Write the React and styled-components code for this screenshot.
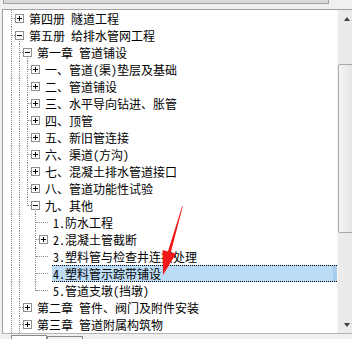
import styled, { createGlobalStyle } from "styled-components"

const GlobalStyle = createGlobalStyle`
  html, body {
    margin: 0;
    padding: 0;
    background: #f0f0f0;
    overflow: hidden;
  }
  body {
    font-family: "Noto Sans CJK SC", "Noto Sans", sans-serif;
  }
`

const Frame = styled.div`
  position: relative;
  width: 352px;
  height: 339px;
  overflow: hidden;
  display: flex;
  flex-direction: column;
  background: #f0f0f0;
`

const TopStrip = styled.div`
  height: 9px;
  flex: none;
`

const TopBox = styled.div`
  margin-left: 3px;
  width: 324px;
  height: 3px;
  background: #dadada;
  border: 1px solid #a3a3a3;
  border-top: none;
`

const Panel = styled.div`
  flex: none;
  display: flex;
  width: 352px;
  height: 323px;
  margin-left: 2px;
  border-top: 1px solid #a0a0a0;
  border-left: 1px solid #a0a0a0;
  border-bottom: 1px solid #b4b4b4;
`

const Tree = styled.div`
  width: 334px;
  flex: none;
  background: #fff;
  overflow: hidden;
`

const Row = styled.div`
  display: flex;
  height: 17px;
  padding-left: 4px;
`

const Cell = styled.span`
  position: relative;
  flex: none;
  width: 8px;

  &::before {
    content: ${p => (p.$v ? '""' : "none")};
    position: absolute;
    left: 4px;
    top: ${p => (p.$v === "down" ? "8px" : "0")};
    height: ${p => (p.$v === "up" ? "9px" : p.$v === "down" ? "9px" : "17px")};
    border-left: 1px dotted #8c8c8c;
  }

  &::after {
    content: ${p => (p.$h ? '""' : "none")};
    position: absolute;
    left: 5px;
    top: 8px;
    width: ${p => p.$h || 0}px;
    border-top: 1px dotted #8c8c8c;
  }
`

const Toggle = styled.span`
  position: absolute;
  left: 0;
  top: 4px;
  width: 7px;
  height: 7px;
  border: 1px solid #8f8f8f;
  background: #fff;
  z-index: 1;

  &::before {
    content: "";
    position: absolute;
    left: 1px;
    top: 3px;
    width: 5px;
    height: 1px;
    background: #000;
  }

  &::after {
    content: ${p => (p.$open ? "none" : '""')};
    position: absolute;
    left: 3px;
    top: 1px;
    width: 1px;
    height: 5px;
    background: #000;
  }
`

const Label = styled.span`
  flex: 1;
  margin-left: 5px;
  padding-left: 1px;
  font-size: 12px;
  line-height: 15px;
  height: 15px;
  color: #000;
  white-space: pre;
  font-feature-settings: "hwid" 1;
  background: ${p => (p.$selected ? "#bcdbf5" : "transparent")};
  border: 1px dotted ${p => (p.$selected ? "#000" : "transparent")};
  border-left: none;
  border-right: none;
  box-shadow: ${p => (p.$selected ? "inset -4px 0 0 #a9cdee" : "none")};
`

const ScrollBar = styled.div`
  width: 17px;
  flex: none;
  display: flex;
  flex-direction: column;
  background: #ebebeb;
  border-left: 1px solid #f6f6f6;
`

const ArrowBtn = styled.div`
  height: 17px;
  flex: none;
  display: flex;
  align-items: center;
  justify-content: center;

  &::before {
    content: "";
    width: 0;
    height: 0;
    border-left: 3.5px solid transparent;
    border-right: 3.5px solid transparent;
    ${p => (p.$down ? "border-top: 4px solid #404040;" : "border-bottom: 4px solid #404040;")}
  }
`

const Thumb = styled.div`
  margin: 37px 0 0 0;
  height: 167px;
  flex: none;
  border: 1px solid #a8a8a8;
  border-radius: 2px;
  background: linear-gradient(to right, #f5f5f5, #e2e2e2);
`

const Fill = styled.div`
  flex: 1;
`

const TabBar = styled.div`
  flex: 1;
  display: flex;
  padding-left: 11px;
  padding-top: 1px;
`

const Tab = styled.div`
  width: 34px;
  height: 20px;
  margin-top: ${p => (p.$active ? "0" : "1px")};
  border: 1px solid #8a8a8a;
  border-bottom: none;
  background: ${p => (p.$active ? "#fff" : "#f0f0f0")};
  font-size: 12px;
  line-height: 17px;
  padding-top: 1px;
  text-align: center;
  color: #000;
`

const Arrow = styled.svg`
  position: absolute;
  left: 0;
  top: 0;
  pointer-events: none;
`

const tree = [
  { text: "第四册 隧道工程", kids: true },
  {
    text: "第五册 给排水管网工程",
    open: true,
    kids: [
      {
        text: "第一章 管道铺设",
        open: true,
        kids: [
          { text: "一、管道(渠)垫层及基础", kids: true },
          { text: "二、管道铺设", kids: true },
          { text: "三、水平导向钻进、胀管", kids: true },
          { text: "四、顶管", kids: true },
          { text: "五、新旧管连接", kids: true },
          { text: "六、渠道(方沟)", kids: true },
          { text: "七、混凝土排水管道接口", kids: true },
          { text: "八、管道功能性试验", kids: true },
          {
            text: "九、其他",
            open: true,
            last: true,
            kids: [
              { text: "1.防水工程" },
              { text: "2.混凝土管截断", kids: true },
              { text: "3.塑料管与检查井连接处理" },
              { text: "4.塑料管示踪带铺设", selected: true },
              { text: "5.管道支墩(挡墩)", last: true },
            ],
          },
        ],
      },
      { text: "第二章 管件、阀门及附件安装", kids: true },
      { text: "第三章 管道附属构筑物", kids: true },
    ],
  },
]

const flatten = (nodes, level = 1, trail = []) =>
  nodes.flatMap(n => [
    { ...n, level, trail },
    ...(n.open ? flatten(n.kids, level + 1, [...trail, !n.last]) : []),
  ])

const rows = flatten(tree)

const TreeRow = ({ item }) => {
  const hasKids = !!item.kids
  return (
    <Row>
      {item.trail.map((on, i) => (
        <Cell key={i} $v={on ? "full" : null} />
      ))}
      <Cell $v={item.last ? "up" : "full"} $h={hasKids ? 3 : 12} />
      <Cell $v={item.open ? "down" : null} $h={hasKids ? 4 : null}>
        {hasKids && <Toggle $open={item.open} />}
      </Cell>
      <Label $selected={item.selected}>{item.text}</Label>
    </Row>
  )
}

export default function App() {
  return (
    <Frame>
      <GlobalStyle />
      <TopStrip>
        <TopBox />
      </TopStrip>
      <Panel>
        <Tree>
          {rows.map((item, i) => (
            <TreeRow key={i} item={item} />
          ))}
        </Tree>
        <ScrollBar>
          <ArrowBtn />
          <Thumb />
          <Fill />
          <ArrowBtn $down />
        </ScrollBar>
      </Panel>
      <TabBar>
        <Tab $active>定额</Tab>
        <Tab>清单</Tab>
      </TabBar>
      <Arrow width="352" height="339">
        <polygon
          points="182.2,206 182.8,206.2 170.9,252.3 176.1,253.8 163,275 162.7,250 167.9,251.5"
          fill="#f01818"
        />
      </Arrow>
    </Frame>
  )
}
